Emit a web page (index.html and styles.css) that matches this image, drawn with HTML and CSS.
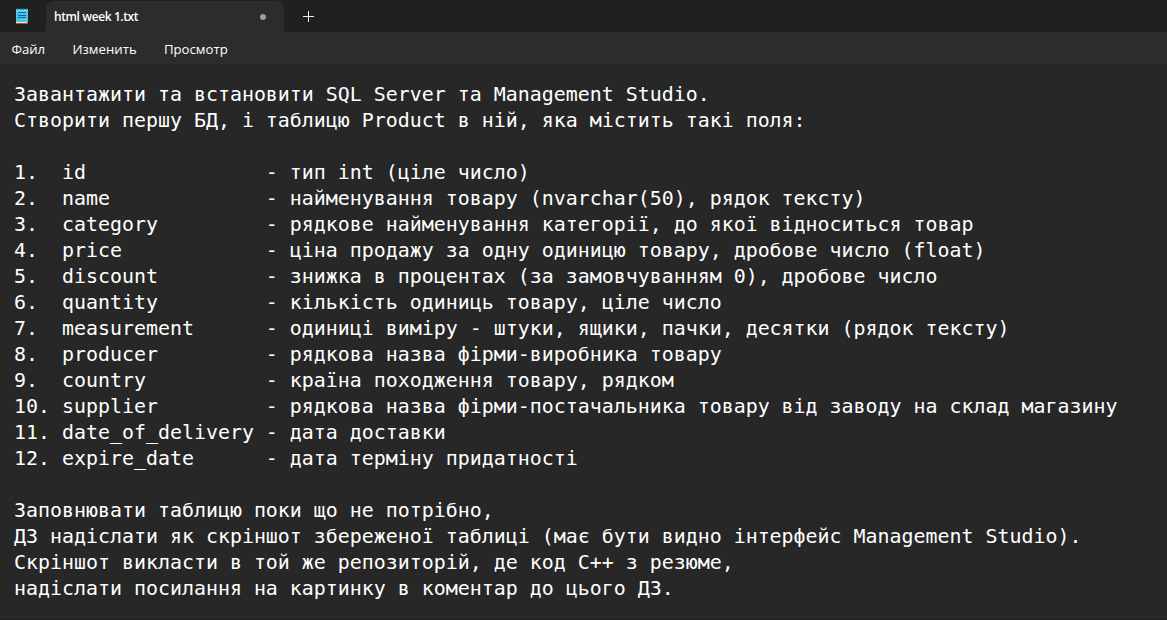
FILE: index.html
```html
<!DOCTYPE html>
<html lang="uk">
<head>
<meta charset="utf-8">
<title>html week 1.txt</title>
<link rel="stylesheet" href="styles.css">
</head>
<body>
<header class="titlebar">
<svg class="app-icon" width="12" height="16" viewBox="0 0 12 16" shape-rendering="crispEdges"><path d="M0 1h12v13H0z" fill="#50c3e6"/><path d="M0 1h12v4H0z" fill="#65d0ed"/><path d="M1 0h1v2H1zM4 0h1v2H4zM7 0h1v2H7zM10 0h1v2h-1z" fill="#0d6c98"/><path d="M2 4h8v1H2zM2 7h8v1H2zM2 9h8v1H2z" fill="#08658f"/><path d="M0 14h11v1H0z" fill="#e9e5df"/><path d="M0 15h12v1H0zM11 14h1v1h-1z" fill="#a95419"/></svg>
<svg class="foot" width="4" height="4" viewBox="0 0 4 4"><path d="M4 0v4H0A4 4 0 0 0 4 0z" fill="#2c2c2c"/></svg>
<div class="tab"><span class="tab-name">html week 1.txt</span><span class="dot"></span></div>
<svg class="foot" width="4" height="4" viewBox="0 0 4 4"><path d="M0 0v4h4A4 4 0 0 1 0 0z" fill="#2c2c2c"/></svg>
<svg class="plus" width="11" height="11" viewBox="0 0 11 11"><path d="M5.500 0v11M0 5.500h11" stroke="#f0f0f0"/></svg>
</header>
<nav class="menu"><span>Файл</span><span>Изменить</span><span>Просмотр</span></nav>
<main class="editor"><pre class="text">Завантажити та встановити SQL Server та Management Studio.
Створити першу БД, і таблицю Product в ній, яка містить такі поля:

1.  id               - тип int (ціле число)
2.  name             - найменування товару (nvarchar(50), рядок тексту)
3.  category         - рядкове найменування категорії, до якої відноситься товар
4.  price            - ціна продажу за одну одиницю товару, дробове число (float)
5.  discount         - знижка в процентах (за замовчуванням 0), дробове число
6.  quantity         - кількість одиниць товару, ціле число
7.  measurement      - одиниці виміру - штуки, ящики, пачки, десятки (рядок тексту)
8.  producer         - рядкова назва фірми-виробника товару
9.  country          - країна походження товару, рядком
10. supplier         - рядкова назва фірми-постачальника товару від заводу на склад магазину
11. date_of_delivery - дата доставки
12. expire_date      - дата терміну придатності

Заповнювати таблицю поки що не потрібно,
ДЗ надіслати як скріншот збереженої таблиці (має бути видно інтерфейс Management Studio).
Скріншот викласти в той же репозиторій, де код C++ з резюме,
надіслати посилання на картинку в коментар до цього ДЗ.</pre></main>
</body>
</html>
```

FILE: styles.css
```css
* { box-sizing: border-box; }
body { margin: 0; width: 1167px; height: 620px; overflow: hidden; display: flex; flex-direction: column; background: #272727; color: #fff; font-family: "Open Sans", "Noto Sans", sans-serif; }
.titlebar { height: 32px; flex: none; display: flex; align-items: flex-start; background: #202020; }
.app-icon { margin: 8px 14px 0 16px; }
.foot { align-self: flex-end; }
.tab { width: 238px; height: 31px; margin-top: 1px; padding: 0 18px 0 8px; display: flex; align-items: center; justify-content: space-between; background: #2c2c2c; border-radius: 8px 8px 0 0; font-size: 12px; }
.tab-name { font-weight: 600; letter-spacing: -0.4px; }
.dot { width: 6px; height: 6px; border-radius: 50%; background: #9d9d9d; }
.plus { margin: 11px 0 0 15px; }
.menu { height: 32px; flex: none; display: flex; align-items: center; gap: 27.300px; padding: 1px 0 0 11.400px; background: #2c2c2c; font-size: 13.200px; }
.editor { flex: 1; padding: 18px 14px 0; border-bottom: 1px solid #202020; }
.text { margin: 0; font: 19.930px/26px "DejaVu Sans Mono", monospace; white-space: pre; }
```
